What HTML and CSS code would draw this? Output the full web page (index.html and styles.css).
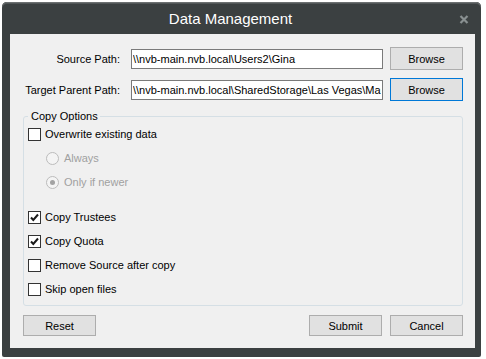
FILE: index.html
```html
<!DOCTYPE html>
<html lang="en">
<head>
  <meta charset="UTF-8" />
  <meta name="viewport" content="width=device-width, initial-scale=1.0" />
  <title>Data Management</title>
  <link rel="stylesheet" href="styles.css">
</head>
<body>
  <div class="window">
    <div class="titlebar">
      <div class="title">Data Management</div>
      <div class="close">
        <svg width="10" height="9" viewBox="0 0 10 9"><path d="M1.5 1 L8.5 8 M8.5 1 L1.5 8" stroke="#899091" stroke-width="2.2" fill="none"/></svg>
      </div>
    </div>

    <div class="client">
      <div class="path-row">
        <label class="path-label">Source Path:</label>
        <input class="path-input" type="text" value="\\nvb-main.nvb.local\Users2\Gina" />
        <button class="btn">Browse</button>
      </div>
      <div class="path-row">
        <label class="path-label">Target Parent Path:</label>
        <input class="path-input" type="text" value="\\nvb-main.nvb.local\SharedStorage\Las Vegas\Marketing" />
        <button class="btn btn-focus">Browse</button>
      </div>

      <fieldset class="options">
        <legend>Copy Options</legend>
        <div class="opt">
          <span class="check"></span>
          <span>Overwrite existing data</span>
        </div>
        <div class="opt opt-sub disabled">
          <span class="radio"></span>
          <span>Always</span>
        </div>
        <div class="opt opt-sub disabled">
          <span class="radio radio-on"></span>
          <span>Only if newer</span>
        </div>
        <div class="opt opt-gap">
          <span class="check"><svg width="11" height="11" viewBox="0 0 11 11"><path d="M2 5.5 L4.3 8 L9 2.5" stroke="#1a1a1a" stroke-width="2" fill="none"/></svg></span>
          <span>Copy Trustees</span>
        </div>
        <div class="opt">
          <span class="check"><svg width="11" height="11" viewBox="0 0 11 11"><path d="M2 5.5 L4.3 8 L9 2.5" stroke="#1a1a1a" stroke-width="2" fill="none"/></svg></span>
          <span>Copy Quota</span>
        </div>
        <div class="opt">
          <span class="check"></span>
          <span>Remove Source after copy</span>
        </div>
        <div class="opt">
          <span class="check"></span>
          <span>Skip open files</span>
        </div>
      </fieldset>

      <div class="actions">
        <button class="btn btn-low">Reset</button>
        <div class="spacer"></div>
        <button class="btn btn-low">Submit</button>
        <button class="btn btn-low">Cancel</button>
      </div>
    </div>
  </div>
</body>
</html>
```

FILE: styles.css
```css
body {
  margin: 0;
  padding: 2px 0 0 2px;
  background: #fff;
  font-family: "Liberation Sans", Arial, sans-serif;
  font-size: 11px;
  color: #000;
}
.window {
  width: 479px;
  height: 355px;
  box-sizing: border-box;
  background: #3b4041;
  border-radius: 5px 5px 2px 2px;
  box-shadow: inset 0 1px 0 #6c7071, inset 0 2px 0 #525758;
  padding: 0 6px 9px 8px;
  display: flex;
  flex-direction: column;
}
.titlebar {
  height: 32px;
  display: flex;
  align-items: center;
  margin-left: -8px;
}
.title {
  flex: 1;
  text-align: center;
  color: #fff;
  font-size: 15px;
  padding-top: 1px;
}
.close {
  width: 10px;
  height: 9px;
  margin-right: 6px;
  margin-top: 3px;
  display: flex;
}
.client {
  flex: 1;
  background: #f0f0f0;
  padding: 13px 12px 12px 13px;
}
.path-row {
  display: grid;
  grid-template-columns: 101px 252px 73px;
  column-gap: 7px;
  align-items: center;
  height: 23px;
  margin-bottom: 8px;
}
.path-label {
  text-align: right;
  padding-right: 4px;
}
.path-input {
  box-sizing: border-box;
  height: 20px;
  border: 1px solid #7a7a7a;
  background: #fff;
  padding: 0 1px;
  font-family: inherit;
  font-size: 11px;
  color: #000;
  outline: none;
}
.btn {
  box-sizing: border-box;
  width: 73px;
  height: 23px;
  border: 1px solid #adadad;
  background: #e1e1e1;
  font-family: inherit;
  font-size: 11px;
  color: #000;
  padding: 0;
}
.btn-focus {
  border-color: #0078d7;
}
.btn-low {
  height: 21px;
}
.options {
  margin: 9px 0 0 0;
  border: 1px solid #d5dfe5;
  border-radius: 3px;
  padding: 0 4px 4px 4px;
}
.options legend {
  padding: 0 2px 0 3px;
  line-height: 12px;
}
.opt {
  display: flex;
  align-items: center;
  gap: 4px;
  height: 24px;
}
.opt-sub {
  margin-left: 18px;
  gap: 5px;
}
.opt-gap {
  margin-top: 11px;
}
.disabled {
  color: #a0a0a0;
}
.check {
  box-sizing: border-box;
  width: 13px;
  height: 13px;
  border: 1px solid #333;
  background: #fff;
  display: flex;
  align-items: center;
  justify-content: center;
}
.radio {
  box-sizing: border-box;
  width: 13px;
  height: 13px;
  border: 1px solid #bcbcbc;
  border-radius: 50%;
  background: #f4f4f4;
  display: flex;
  align-items: center;
  justify-content: center;
}
.radio-on::after {
  content: "";
  width: 5px;
  height: 5px;
  border-radius: 50%;
  background: #a3a3a3;
}
.actions {
  display: flex;
  gap: 8px;
  margin-top: 9px;
}
.spacer {
  flex: 1;
}
```
